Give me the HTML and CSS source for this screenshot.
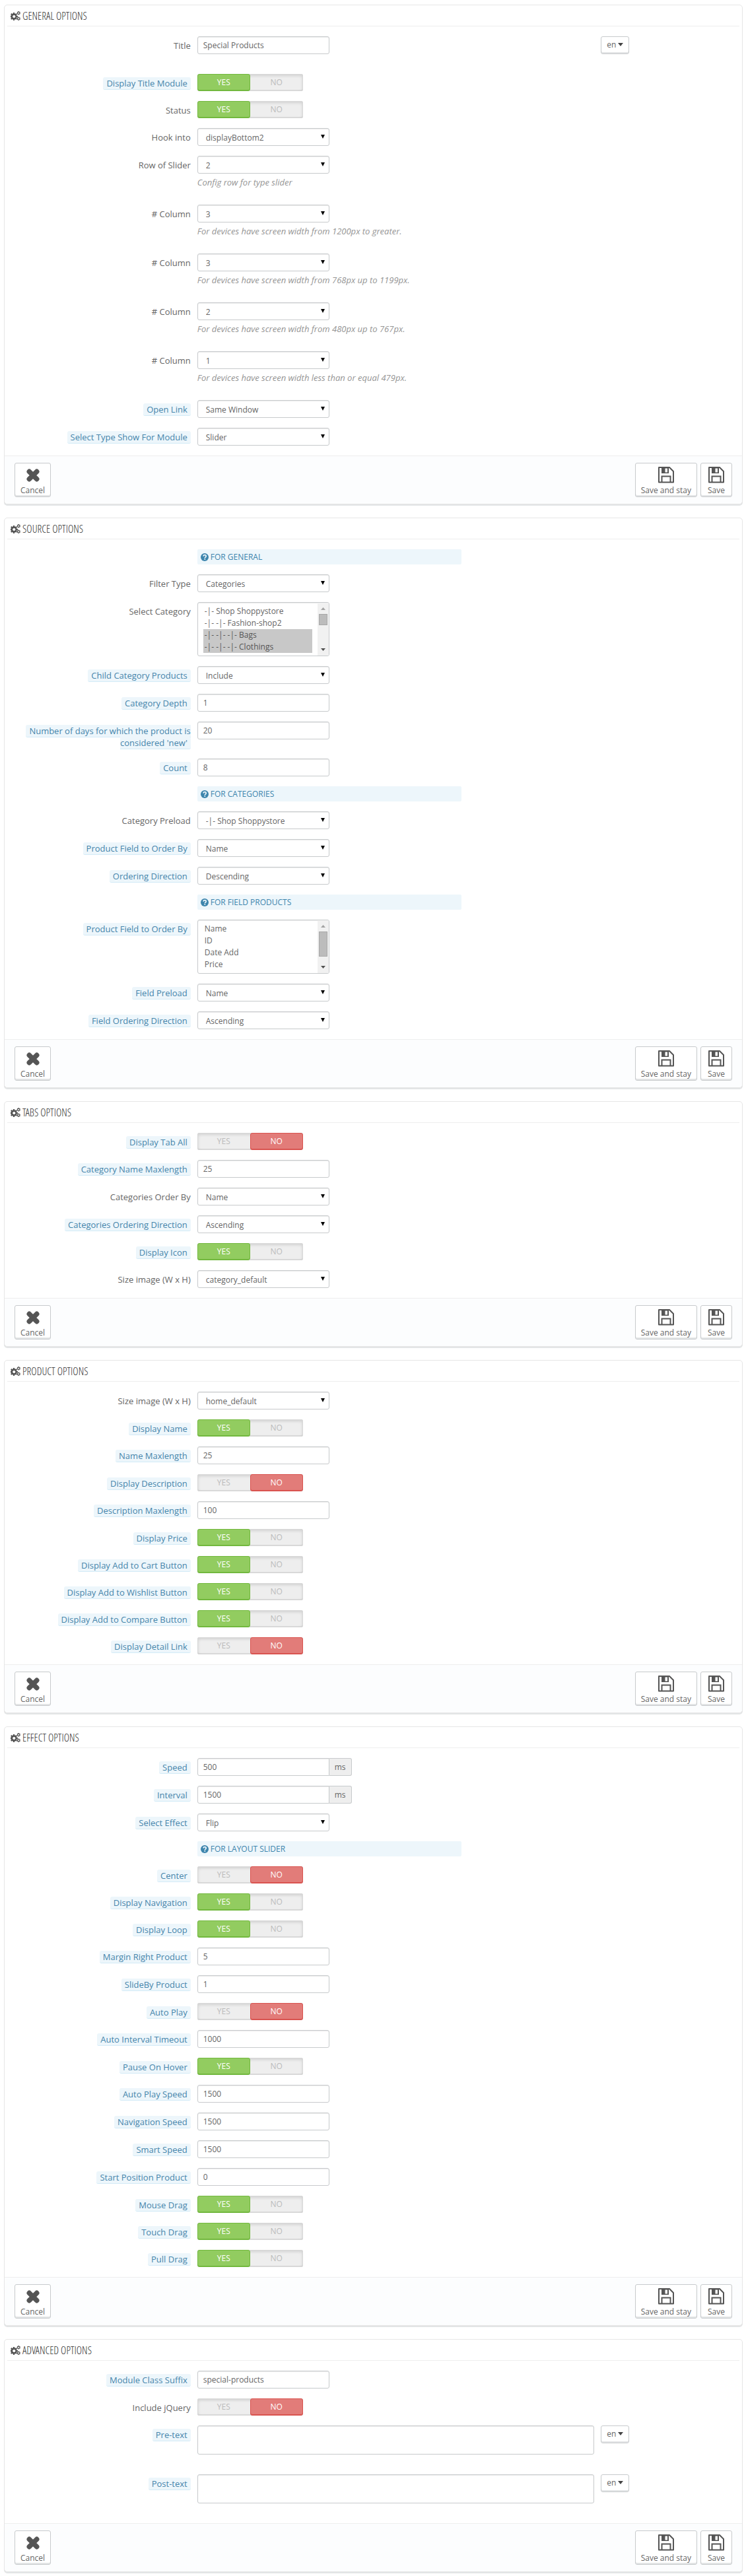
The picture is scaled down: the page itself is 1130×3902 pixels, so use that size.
FILE: index.html
```html
<!DOCTYPE html>
<html lang="en">
<head>
  <meta charset="UTF-8">
  <meta name="viewport" content="width=device-width, initial-scale=1.0">
  <title>Module options</title>
  <link rel="stylesheet" href="styles.css">
</head>
<body>

  <!-- Icons -->
  <svg class="icon-defs" aria-hidden="true">
    <symbol id="icon-cogs" viewBox="0 0 30 28">
      <path fill-rule="evenodd" d="M8 4h4l.6 3 1.8.8 2.6-1.7 2.8 2.8-1.7 2.6.8 1.8 3 .6v4l-3 .6-.8 1.8 1.7 2.6-2.8 2.8-2.6-1.7-1.8.8-.6 3H8l-.6-3-1.8-.8L3 25.700l-2.800-2.800 1.700-2.600-.800-1.800L0 18v-4l1.100-.600.800-1.800L.200 9 3 6.200l2.600 1.700L7.400 7zM10.500 11.800a4.200 4.200 0 1 0 .001 0z"/>
      <path fill-rule="evenodd" d="M23 0h3l.4 1.800 1.800-.3 1.500 2.500-1.200 1.400 1.200 1.600-1.500 2.500-1.800-.3L26 11h-3l-.4-1.800-1.800.3-1.500-2.500 1.200-1.600L19.300 4l1.500-2.500 1.800.3zM24.500 3.600a1.900 1.900 0 1 0 .001 0z"/>
      <path fill-rule="evenodd" d="M23 17h3l.4 1.800 1.800-.3 1.500 2.500-1.200 1.400 1.200 1.600-1.500 2.500-1.800-.3L26 28h-3l-.4-1.800-1.800.3-1.500-2.500 1.200-1.600-1.200-1.400 1.500-2.500 1.800.3zM24.500 20.600a1.900 1.900 0 1 0 .001 0z"/>
    </symbol>
    <symbol id="icon-help" viewBox="0 0 12 12">
      <circle cx="6" cy="6" r="6"/>
      <path d="M3.900 4.500C4.200 3.200 5 2.700 6.100 2.700c1.200 0 2.100.700 2.100 1.800 0 1.500-1.900 1.400-1.900 2.700M6.300 8v1.700" fill="none" stroke="#edf6fb" stroke-width="1.700"/>
    </symbol>
    <symbol id="icon-cancel" viewBox="0 0 30 30">
      <path d="M9.300 10.300l11.400 11.400M20.700 10.300L9.300 21.700" fill="none" stroke="currentColor" stroke-width="7.500" stroke-linecap="round"/>
    </symbol>
    <symbol id="icon-save" viewBox="0 0 30 30">
      <path d="M4 4h16l6 6v16.500H4z" fill="none" stroke="currentColor" stroke-width="2" stroke-linejoin="round"/>
      <path d="M8.500 26v-8.500h13V26" fill="none" stroke="currentColor" stroke-width="2"/>
      <path fill-rule="evenodd" d="M8 4h11v9H8zM13.500 5.500v6h3.500v-6z"/>
    </symbol>
    <symbol id="icon-up" viewBox="0 0 7 4"><path d="M0 4h7L3.500 0z"/></symbol>
    <symbol id="icon-down" viewBox="0 0 7 4"><path d="M0 0h7L3.500 4z"/></symbol>
  </svg>

  <form class="panel">
    <h3 class="panel-heading"><svg class="icon-cogs"><use href="#icon-cogs"/></svg>General Options</h3>
    <div class="panel-body">
      <div class="form-group multilang">
        <label class="control-label" for="title">Title</label>
        <div class="field">
          <div class="lang-row">
            <div class="lang-col"><input type="text" class="form-control" id="title" value="Special Products"></div>
            <button type="button" class="btn-lang">en<span class="caret"></span></button>
          </div>
        </div>
      </div>
      <div class="form-group">
        <span class="control-label"><span class="label-tooltip">Display Title Module</span></span>
        <div class="field"><span class="switch">
          <input type="radio" name="display_title" id="display_title_on" checked><label for="display_title_on">YES</label>
          <input type="radio" name="display_title" id="display_title_off"><label for="display_title_off">NO</label>
        </span></div>
      </div>
      <div class="form-group">
        <span class="control-label">Status</span>
        <div class="field"><span class="switch">
          <input type="radio" name="status" id="status_on" checked><label for="status_on">YES</label>
          <input type="radio" name="status" id="status_off"><label for="status_off">NO</label>
        </span></div>
      </div>
      <div class="form-group">
        <label class="control-label" for="hook">Hook into</label>
        <div class="field"><select class="form-control" id="hook"><option>displayBottom2</option></select></div>
      </div>
      <div class="form-group">
        <label class="control-label" for="nb_row">Row of Slider</label>
        <div class="field">
          <select class="form-control" id="nb_row"><option>2</option></select>
          <p class="help-block">Config row for type slider</p>
        </div>
      </div>
      <div class="form-group">
        <label class="control-label" for="column1"># Column</label>
        <div class="field">
          <select class="form-control" id="column1"><option>3</option></select>
          <p class="help-block">For devices have screen width from 1200px to greater.</p>
        </div>
      </div>
      <div class="form-group">
        <label class="control-label" for="column2"># Column</label>
        <div class="field">
          <select class="form-control" id="column2"><option>3</option></select>
          <p class="help-block">For devices have screen width from 768px up to 1199px.</p>
        </div>
      </div>
      <div class="form-group">
        <label class="control-label" for="column3"># Column</label>
        <div class="field">
          <select class="form-control" id="column3"><option>2</option></select>
          <p class="help-block">For devices have screen width from 480px up to 767px.</p>
        </div>
      </div>
      <div class="form-group">
        <label class="control-label" for="column4"># Column</label>
        <div class="field">
          <select class="form-control" id="column4"><option>1</option></select>
          <p class="help-block">For devices have screen width less than or equal 479px.</p>
        </div>
      </div>
      <div class="form-group">
        <label class="control-label" for="target"><span class="label-tooltip">Open Link</span></label>
        <div class="field"><select class="form-control" id="target"><option>Same Window</option></select></div>
      </div>
      <div class="form-group">
        <label class="control-label" for="type_show"><span class="label-tooltip">Select Type Show For Module</span></label>
        <div class="field"><select class="form-control" id="type_show"><option>Slider</option></select></div>
      </div>
    </div>
    <div class="panel-footer">
      <button type="button" class="btn"><svg><use href="#icon-cancel"/></svg>Cancel</button>
      <button type="button" class="btn btn-right"><svg><use href="#icon-save"/></svg>Save and stay</button>
      <button type="button" class="btn"><svg><use href="#icon-save"/></svg>Save</button>
    </div>
  </form>

  <form class="panel">
    <h3 class="panel-heading"><svg class="icon-cogs"><use href="#icon-cogs"/></svg>Source Options</h3>
    <div class="panel-body">
      <div class="form-group">
        <div class="field field-offset"><h4 class="sub-heading"><svg><use href="#icon-help"/></svg>For General</h4></div>
      </div>
      <div class="form-group">
        <label class="control-label" for="filter_type">Filter Type</label>
        <div class="field"><select class="form-control" id="filter_type"><option>Categories</option></select></div>
      </div>
      <div class="form-group">
        <label class="control-label" for="catids">Select Category</label>
        <div class="field">
          <div class="list-box">
            <select class="form-control" id="catids" multiple size="4">
              <option>-|- Shop Shoppystore</option>
              <option>-|- -|- Fashion-shop2</option>
              <option selected>-|- -|- -|- Bags</option>
              <option selected>-|- -|- -|- Clothings</option>
            </select>
            <span class="list-scroll" aria-hidden="true">
              <svg class="scroll-up"><use href="#icon-up"/></svg>
              <span class="scroll-track"><span class="scroll-thumb"></span></span>
              <svg><use href="#icon-down"/></svg>
            </span>
          </div>
        </div>
      </div>
      <div class="form-group">
        <label class="control-label" for="child_category"><span class="label-tooltip">Child Category Products</span></label>
        <div class="field"><select class="form-control" id="child_category"><option>Include</option></select></div>
      </div>
      <div class="form-group">
        <label class="control-label" for="depth"><span class="label-tooltip">Category Depth</span></label>
        <div class="field"><input type="text" class="form-control" id="depth" value="1"></div>
      </div>
      <div class="form-group">
        <label class="control-label" for="nb_days"><span class="label-tooltip">Number of days for which the product is considered 'new'</span></label>
        <div class="field"><input type="text" class="form-control" id="nb_days" value="20"></div>
      </div>
      <div class="form-group">
        <label class="control-label" for="count"><span class="label-tooltip">Count</span></label>
        <div class="field"><input type="text" class="form-control" id="count" value="8"></div>
      </div>
      <div class="form-group">
        <div class="field field-offset"><h4 class="sub-heading"><svg><use href="#icon-help"/></svg>For Categories</h4></div>
      </div>
      <div class="form-group">
        <label class="control-label" for="cat_preload">Category Preload</label>
        <div class="field"><select class="form-control" id="cat_preload"><option>-|- Shop Shoppystore</option></select></div>
      </div>
      <div class="form-group">
        <label class="control-label" for="order_by"><span class="label-tooltip">Product Field to Order By</span></label>
        <div class="field"><select class="form-control" id="order_by"><option>Name</option></select></div>
      </div>
      <div class="form-group">
        <label class="control-label" for="ordering"><span class="label-tooltip">Ordering Direction</span></label>
        <div class="field"><select class="form-control" id="ordering"><option>Descending</option></select></div>
      </div>
      <div class="form-group">
        <div class="field field-offset"><h4 class="sub-heading"><svg><use href="#icon-help"/></svg>For Field Products</h4></div>
      </div>
      <div class="form-group">
        <label class="control-label" for="field_select"><span class="label-tooltip">Product Field to Order By</span></label>
        <div class="field">
          <div class="list-box">
            <select class="form-control" id="field_select" multiple size="4">
              <option>Name</option>
              <option>ID</option>
              <option>Date Add</option>
              <option>Price</option>
            </select>
            <span class="list-scroll" aria-hidden="true">
              <svg class="scroll-up"><use href="#icon-up"/></svg>
              <span class="scroll-track"><span class="scroll-thumb scroll-thumb-long"></span></span>
              <svg><use href="#icon-down"/></svg>
            </span>
          </div>
        </div>
      </div>
      <div class="form-group">
        <label class="control-label" for="field_preload"><span class="label-tooltip">Field Preload</span></label>
        <div class="field"><select class="form-control" id="field_preload"><option>Name</option></select></div>
      </div>
      <div class="form-group">
        <label class="control-label" for="field_direction"><span class="label-tooltip">Field Ordering Direction</span></label>
        <div class="field"><select class="form-control" id="field_direction"><option>Ascending</option></select></div>
      </div>
    </div>
    <div class="panel-footer">
      <button type="button" class="btn"><svg><use href="#icon-cancel"/></svg>Cancel</button>
      <button type="button" class="btn btn-right"><svg><use href="#icon-save"/></svg>Save and stay</button>
      <button type="button" class="btn"><svg><use href="#icon-save"/></svg>Save</button>
    </div>
  </form>

  <form class="panel">
    <h3 class="panel-heading"><svg class="icon-cogs"><use href="#icon-cogs"/></svg>Tabs Options</h3>
    <div class="panel-body">
      <div class="form-group">
        <span class="control-label"><span class="label-tooltip">Display Tab All</span></span>
        <div class="field"><span class="switch">
          <input type="radio" name="tab_all" id="tab_all_on"><label for="tab_all_on">YES</label>
          <input type="radio" name="tab_all" id="tab_all_off" checked><label for="tab_all_off">NO</label>
        </span></div>
      </div>
      <div class="form-group">
        <label class="control-label" for="cat_maxlength"><span class="label-tooltip">Category Name Maxlength</span></label>
        <div class="field"><input type="text" class="form-control" id="cat_maxlength" value="25"></div>
      </div>
      <div class="form-group">
        <label class="control-label" for="cat_order_by">Categories Order By</label>
        <div class="field"><select class="form-control" id="cat_order_by"><option>Name</option></select></div>
      </div>
      <div class="form-group">
        <label class="control-label" for="cat_direction"><span class="label-tooltip">Categories Ordering Direction</span></label>
        <div class="field"><select class="form-control" id="cat_direction"><option>Ascending</option></select></div>
      </div>
      <div class="form-group">
        <span class="control-label"><span class="label-tooltip">Display Icon</span></span>
        <div class="field"><span class="switch">
          <input type="radio" name="tab_icon" id="tab_icon_on" checked><label for="tab_icon_on">YES</label>
          <input type="radio" name="tab_icon" id="tab_icon_off"><label for="tab_icon_off">NO</label>
        </span></div>
      </div>
      <div class="form-group">
        <label class="control-label" for="cat_image">Size image (W x H)</label>
        <div class="field"><select class="form-control" id="cat_image"><option>category_default</option></select></div>
      </div>
    </div>
    <div class="panel-footer">
      <button type="button" class="btn"><svg><use href="#icon-cancel"/></svg>Cancel</button>
      <button type="button" class="btn btn-right"><svg><use href="#icon-save"/></svg>Save and stay</button>
      <button type="button" class="btn"><svg><use href="#icon-save"/></svg>Save</button>
    </div>
  </form>

  <form class="panel">
    <h3 class="panel-heading"><svg class="icon-cogs"><use href="#icon-cogs"/></svg>Product Options</h3>
    <div class="panel-body">
      <div class="form-group">
        <label class="control-label" for="product_image">Size image (W x H)</label>
        <div class="field"><select class="form-control" id="product_image"><option>home_default</option></select></div>
      </div>
      <div class="form-group">
        <span class="control-label"><span class="label-tooltip">Display Name</span></span>
        <div class="field"><span class="switch">
          <input type="radio" name="display_name" id="display_name_on" checked><label for="display_name_on">YES</label>
          <input type="radio" name="display_name" id="display_name_off"><label for="display_name_off">NO</label>
        </span></div>
      </div>
      <div class="form-group">
        <label class="control-label" for="name_maxlength"><span class="label-tooltip">Name Maxlength</span></label>
        <div class="field"><input type="text" class="form-control" id="name_maxlength" value="25"></div>
      </div>
      <div class="form-group">
        <span class="control-label"><span class="label-tooltip">Display Description</span></span>
        <div class="field"><span class="switch">
          <input type="radio" name="display_desc" id="display_desc_on"><label for="display_desc_on">YES</label>
          <input type="radio" name="display_desc" id="display_desc_off" checked><label for="display_desc_off">NO</label>
        </span></div>
      </div>
      <div class="form-group">
        <label class="control-label" for="desc_maxlength"><span class="label-tooltip">Description Maxlength</span></label>
        <div class="field"><input type="text" class="form-control" id="desc_maxlength" value="100"></div>
      </div>
      <div class="form-group">
        <span class="control-label"><span class="label-tooltip">Display Price</span></span>
        <div class="field"><span class="switch">
          <input type="radio" name="display_price" id="display_price_on" checked><label for="display_price_on">YES</label>
          <input type="radio" name="display_price" id="display_price_off"><label for="display_price_off">NO</label>
        </span></div>
      </div>
      <div class="form-group">
        <span class="control-label"><span class="label-tooltip">Display Add to Cart Button</span></span>
        <div class="field"><span class="switch">
          <input type="radio" name="display_cart" id="display_cart_on" checked><label for="display_cart_on">YES</label>
          <input type="radio" name="display_cart" id="display_cart_off"><label for="display_cart_off">NO</label>
        </span></div>
      </div>
      <div class="form-group">
        <span class="control-label"><span class="label-tooltip">Display Add to Wishlist Button</span></span>
        <div class="field"><span class="switch">
          <input type="radio" name="display_wishlist" id="display_wishlist_on" checked><label for="display_wishlist_on">YES</label>
          <input type="radio" name="display_wishlist" id="display_wishlist_off"><label for="display_wishlist_off">NO</label>
        </span></div>
      </div>
      <div class="form-group">
        <span class="control-label"><span class="label-tooltip">Display Add to Compare Button</span></span>
        <div class="field"><span class="switch">
          <input type="radio" name="display_compare" id="display_compare_on" checked><label for="display_compare_on">YES</label>
          <input type="radio" name="display_compare" id="display_compare_off"><label for="display_compare_off">NO</label>
        </span></div>
      </div>
      <div class="form-group">
        <span class="control-label"><span class="label-tooltip">Display Detail Link</span></span>
        <div class="field"><span class="switch">
          <input type="radio" name="display_detail" id="display_detail_on"><label for="display_detail_on">YES</label>
          <input type="radio" name="display_detail" id="display_detail_off" checked><label for="display_detail_off">NO</label>
        </span></div>
      </div>
    </div>
    <div class="panel-footer">
      <button type="button" class="btn"><svg><use href="#icon-cancel"/></svg>Cancel</button>
      <button type="button" class="btn btn-right"><svg><use href="#icon-save"/></svg>Save and stay</button>
      <button type="button" class="btn"><svg><use href="#icon-save"/></svg>Save</button>
    </div>
  </form>

  <form class="panel">
    <h3 class="panel-heading"><svg class="icon-cogs"><use href="#icon-cogs"/></svg>Effect Options</h3>
    <div class="panel-body">
      <div class="form-group">
        <label class="control-label" for="speed"><span class="label-tooltip">Speed</span></label>
        <div class="field input-group"><input type="text" class="form-control" id="speed" value="500"><span class="addon">ms</span></div>
      </div>
      <div class="form-group">
        <label class="control-label" for="interval"><span class="label-tooltip">Interval</span></label>
        <div class="field input-group"><input type="text" class="form-control" id="interval" value="1500"><span class="addon">ms</span></div>
      </div>
      <div class="form-group">
        <label class="control-label" for="effect"><span class="label-tooltip">Select Effect</span></label>
        <div class="field"><select class="form-control" id="effect"><option>Flip</option></select></div>
      </div>
      <div class="form-group">
        <div class="field field-offset"><h4 class="sub-heading"><svg><use href="#icon-help"/></svg>For Layout Slider</h4></div>
      </div>
      <div class="form-group">
        <span class="control-label"><span class="label-tooltip">Center</span></span>
        <div class="field"><span class="switch">
          <input type="radio" name="center" id="center_on"><label for="center_on">YES</label>
          <input type="radio" name="center" id="center_off" checked><label for="center_off">NO</label>
        </span></div>
      </div>
      <div class="form-group">
        <span class="control-label"><span class="label-tooltip">Display Navigation</span></span>
        <div class="field"><span class="switch">
          <input type="radio" name="nav" id="nav_on" checked><label for="nav_on">YES</label>
          <input type="radio" name="nav" id="nav_off"><label for="nav_off">NO</label>
        </span></div>
      </div>
      <div class="form-group">
        <span class="control-label"><span class="label-tooltip">Display Loop</span></span>
        <div class="field"><span class="switch">
          <input type="radio" name="loop" id="loop_on" checked><label for="loop_on">YES</label>
          <input type="radio" name="loop" id="loop_off"><label for="loop_off">NO</label>
        </span></div>
      </div>
      <div class="form-group">
        <label class="control-label" for="margin"><span class="label-tooltip">Margin Right Product</span></label>
        <div class="field"><input type="text" class="form-control" id="margin" value="5"></div>
      </div>
      <div class="form-group">
        <label class="control-label" for="slideby"><span class="label-tooltip">SlideBy Product</span></label>
        <div class="field"><input type="text" class="form-control" id="slideby" value="1"></div>
      </div>
      <div class="form-group">
        <span class="control-label"><span class="label-tooltip">Auto Play</span></span>
        <div class="field"><span class="switch">
          <input type="radio" name="autoplay" id="autoplay_on"><label for="autoplay_on">YES</label>
          <input type="radio" name="autoplay" id="autoplay_off" checked><label for="autoplay_off">NO</label>
        </span></div>
      </div>
      <div class="form-group">
        <label class="control-label" for="timeout"><span class="label-tooltip">Auto Interval Timeout</span></label>
        <div class="field"><input type="text" class="form-control" id="timeout" value="1000"></div>
      </div>
      <div class="form-group">
        <span class="control-label"><span class="label-tooltip">Pause On Hover</span></span>
        <div class="field"><span class="switch">
          <input type="radio" name="pause" id="pause_on" checked><label for="pause_on">YES</label>
          <input type="radio" name="pause" id="pause_off"><label for="pause_off">NO</label>
        </span></div>
      </div>
      <div class="form-group">
        <label class="control-label" for="autoplay_speed"><span class="label-tooltip">Auto Play Speed</span></label>
        <div class="field"><input type="text" class="form-control" id="autoplay_speed" value="1500"></div>
      </div>
      <div class="form-group">
        <label class="control-label" for="nav_speed"><span class="label-tooltip">Navigation Speed</span></label>
        <div class="field"><input type="text" class="form-control" id="nav_speed" value="1500"></div>
      </div>
      <div class="form-group">
        <label class="control-label" for="smart_speed"><span class="label-tooltip">Smart Speed</span></label>
        <div class="field"><input type="text" class="form-control" id="smart_speed" value="1500"></div>
      </div>
      <div class="form-group">
        <label class="control-label" for="start_position"><span class="label-tooltip">Start Position Product</span></label>
        <div class="field"><input type="text" class="form-control" id="start_position" value="0"></div>
      </div>
      <div class="form-group">
        <span class="control-label"><span class="label-tooltip">Mouse Drag</span></span>
        <div class="field"><span class="switch">
          <input type="radio" name="mouse_drag" id="mouse_drag_on" checked><label for="mouse_drag_on">YES</label>
          <input type="radio" name="mouse_drag" id="mouse_drag_off"><label for="mouse_drag_off">NO</label>
        </span></div>
      </div>
      <div class="form-group">
        <span class="control-label"><span class="label-tooltip">Touch Drag</span></span>
        <div class="field"><span class="switch">
          <input type="radio" name="touch_drag" id="touch_drag_on" checked><label for="touch_drag_on">YES</label>
          <input type="radio" name="touch_drag" id="touch_drag_off"><label for="touch_drag_off">NO</label>
        </span></div>
      </div>
      <div class="form-group">
        <span class="control-label"><span class="label-tooltip">Pull Drag</span></span>
        <div class="field"><span class="switch">
          <input type="radio" name="pull_drag" id="pull_drag_on" checked><label for="pull_drag_on">YES</label>
          <input type="radio" name="pull_drag" id="pull_drag_off"><label for="pull_drag_off">NO</label>
        </span></div>
      </div>
    </div>
    <div class="panel-footer">
      <button type="button" class="btn"><svg><use href="#icon-cancel"/></svg>Cancel</button>
      <button type="button" class="btn btn-right"><svg><use href="#icon-save"/></svg>Save and stay</button>
      <button type="button" class="btn"><svg><use href="#icon-save"/></svg>Save</button>
    </div>
  </form>

  <form class="panel">
    <h3 class="panel-heading"><svg class="icon-cogs"><use href="#icon-cogs"/></svg>Advanced Options</h3>
    <div class="panel-body">
      <div class="form-group">
        <label class="control-label" for="suffix"><span class="label-tooltip">Module Class Suffix</span></label>
        <div class="field"><input type="text" class="form-control" id="suffix" value="special-products"></div>
      </div>
      <div class="form-group">
        <span class="control-label">Include jQuery</span>
        <div class="field"><span class="switch">
          <input type="radio" name="jquery" id="jquery_on"><label for="jquery_on">YES</label>
          <input type="radio" name="jquery" id="jquery_off" checked><label for="jquery_off">NO</label>
        </span></div>
      </div>
      <div class="form-group multilang">
        <label class="control-label" for="pretext"><span class="label-tooltip">Pre-text</span></label>
        <div class="field">
          <div class="lang-row">
            <div class="lang-col"><textarea class="form-control" id="pretext"></textarea></div>
            <button type="button" class="btn-lang">en<span class="caret"></span></button>
          </div>
        </div>
      </div>
      <div class="form-group multilang">
        <label class="control-label" for="posttext"><span class="label-tooltip">Post-text</span></label>
        <div class="field">
          <div class="lang-row">
            <div class="lang-col"><textarea class="form-control" id="posttext"></textarea></div>
            <button type="button" class="btn-lang">en<span class="caret"></span></button>
          </div>
        </div>
      </div>
    </div>
    <div class="panel-footer">
      <button type="button" class="btn"><svg><use href="#icon-cancel"/></svg>Cancel</button>
      <button type="button" class="btn btn-right"><svg><use href="#icon-save"/></svg>Save and stay</button>
      <button type="button" class="btn"><svg><use href="#icon-save"/></svg>Save</button>
    </div>
  </form>

</body>
</html>
```
FILE: styles.css
```css
* {
  box-sizing: border-box;
}

body {
  margin: 0;
  padding: 7px 5px 4px 6px;
  background: #fff;
  color: #666;
  font: 12px/17px "Open Sans", sans-serif;
}

input,
select,
textarea,
button {
  font: inherit;
  color: inherit;
}

svg {
  fill: currentColor;
}

.icon-defs {
  display: none;
}

/* Panels */
.panel {
  margin: 0 0 20px;
  border: 1px solid #e6e6e6;
  border-radius: 5px;
  background: #fff;
  box-shadow: 0 2px 0 #e3e5e6;
}

.panel:last-child {
  margin-bottom: 0;
}

.panel-heading {
  display: flex;
  align-items: center;
  height: 32px;
  margin: 0 4px 15px;
  padding: 0 5px;
  border-bottom: 1px solid #eee;
  color: #333;
  font: 300 16px/20px "Open Sans Condensed Light", "Ubuntu Condensed", "Open Sans Condensed", "Open Sans", sans-serif;
  text-transform: uppercase;
}

.icon-cogs {
  width: 15px;
  height: 14px;
  margin-right: 3px;
  color: #555;
}

.panel-body {
  padding: 0 20px;
}

.panel-footer {
  display: flex;
  gap: 5px;
  height: 73px;
  padding: 10px 15px;
  border-top: 1px solid #eee;
  border-radius: 0 0 5px 5px;
  background: #fcfdfe;
}

/* Form rows */
.form-group {
  display: flex;
  margin: 0 -5px 15px;
}

.form-group.multilang {
  margin-bottom: 30px;
}

.control-label {
  flex: 0 0 25%;
  padding: 5px 5px 0;
  font-size: 13px;
  line-height: 18px;
  text-align: right;
}

.label-tooltip {
  padding: 0 5px;
  border-bottom: 1px solid #d3ebf7;
  border-radius: 3px;
  background: #edf6fb;
  color: #4585ab;
}

.field {
  flex: 0 0 75%;
  padding: 0 5px;
}

.field-offset {
  margin-left: 25%;
}

.form-control {
  display: block;
  width: 200px;
  height: 27px;
  margin: 0;
  padding: 4px 8px;
  border: 1px solid #c7cacc;
  border-radius: 3px;
  background-color: #fff;
  box-shadow: inset 0 1px 1px rgba(0, 0, 0, 0.08);
}

select.form-control {
  padding: 5px 12px 3px;
  appearance: none;
  background-image: url("data:image/svg+xml,%3Csvg xmlns='http://www.w3.org/2000/svg' viewBox='0 0 6 6'%3E%3Cpath d='M0 0h6L3 6z'/%3E%3C/svg%3E");
  background-repeat: no-repeat;
  background-position: right 6px top 9px;
  background-size: 6px 6px;
}

/* List boxes */
.list-box {
  position: relative;
  width: 200px;
}

.list-box select.form-control {
  height: 82px;
  padding: 4px 25px 4px 8px;
  background-image: none;
  scrollbar-width: none;
}

.list-box option {
  min-height: 18px;
  padding: 0 2px;
  line-height: 18px;
}

.list-box option:checked {
  background: #c8c8c8 linear-gradient(#c8c8c8, #c8c8c8);
  color: #555;
  -webkit-text-fill-color: #555;
}

.list-scroll {
  position: absolute;
  top: 1px;
  right: 1px;
  bottom: 1px;
  display: flex;
  flex-direction: column;
  align-items: center;
  width: 17px;
  padding: 7px 0;
  border-radius: 0 2px 2px 0;
  background: #f1f1f1;
  color: #505050;
}

.list-scroll svg {
  flex: none;
  width: 7px;
  height: 4px;
}

.list-scroll .scroll-up {
  color: #a3a3a3;
}

.scroll-track {
  flex: 1;
  padding: 6px 0;
}

.scroll-thumb {
  display: block;
  width: 13px;
  height: 17px;
  border: 1px solid #a8a8a8;
  background: #bcbcbc;
}

.scroll-thumb-long {
  height: 38px;
}

textarea.form-control {
  width: 100%;
  height: 44px;
  resize: none;
}

.help-block {
  margin: 5px 0 10px;
  color: #959595;
  font-size: 13px;
  font-style: italic;
}

.sub-heading {
  display: flex;
  align-items: center;
  max-width: 400px;
  height: 23px;
  margin: 0;
  padding: 0 5px;
  border-radius: 2px;
  background: #edf6fb;
  color: #3d85ad;
  font-size: 12px;
  font-weight: normal;
  text-transform: uppercase;
}

.sub-heading svg {
  width: 12px;
  height: 12px;
  margin-right: 3px;
}

.input-group {
  display: flex;
}

.input-group .form-control {
  border-radius: 3px 0 0 3px;
}

.addon {
  height: 27px;
  padding: 4px 8px;
  border: 1px solid #c7cacc;
  border-left: 0;
  border-radius: 0 3px 3px 0;
  background: #eee;
}

/* Multi-language fields */
.lang-row {
  display: flex;
  align-items: flex-start;
  margin: 0 -5px;
}

.lang-col {
  flex: 0 0 75%;
  padding: 0 5px;
}

.btn-lang {
  display: flex;
  align-items: center;
  gap: 3px;
  height: 27px;
  margin-left: 5px;
  padding: 0 8px 2px;
  border: 1px solid #c7cacc;
  border-radius: 3px;
  background: #fff;
  box-shadow: inset 0 -2px 0 #e3e5e6;
}

.caret {
  border: 4px solid transparent;
  border-top: 5px solid #444;
  border-bottom: 0;
}

/* Yes / no switch */
.switch {
  position: relative;
  display: flex;
  width: 160px;
  height: 26px;
  border-radius: 3px;
  background: #eee;
  box-shadow: inset 0 0 0 1px #d8d8d8, inset 0 2px 4px 1px rgba(0, 0, 0, 0.12), inset 0 -2px 0 #dcdcdc;
}

.switch input {
  position: absolute;
  margin: 0;
  opacity: 0;
}

.switch label {
  flex: 1;
  border: 1px solid transparent;
  border-radius: 3px;
  color: #bbb;
  line-height: 23px;
  text-align: center;
  cursor: pointer;
}

.switch input:checked + label {
  border-color: #72b83e;
  background: #92cc60;
  box-shadow: inset 0 -1px 0 #72b83e;
  color: #fff;
}

.switch input:checked + label:last-child {
  border-color: #d9534f;
  background: #e27c79;
  box-shadow: inset 0 -1px 0 #d9534f;
}

/* Footer buttons */
.btn {
  display: flex;
  flex-direction: column;
  align-items: center;
  height: 52px;
  padding: 2px 8px 0;
  border: 1px solid #c7cacc;
  border-radius: 3px;
  background: #fff;
  box-shadow: inset 0 -2px 0 #e3e5e6;
  color: #666;
  cursor: pointer;
}

.btn svg {
  width: 30px;
  height: 30px;
  color: #555;
}

.btn-right {
  margin-left: auto;
}
```
